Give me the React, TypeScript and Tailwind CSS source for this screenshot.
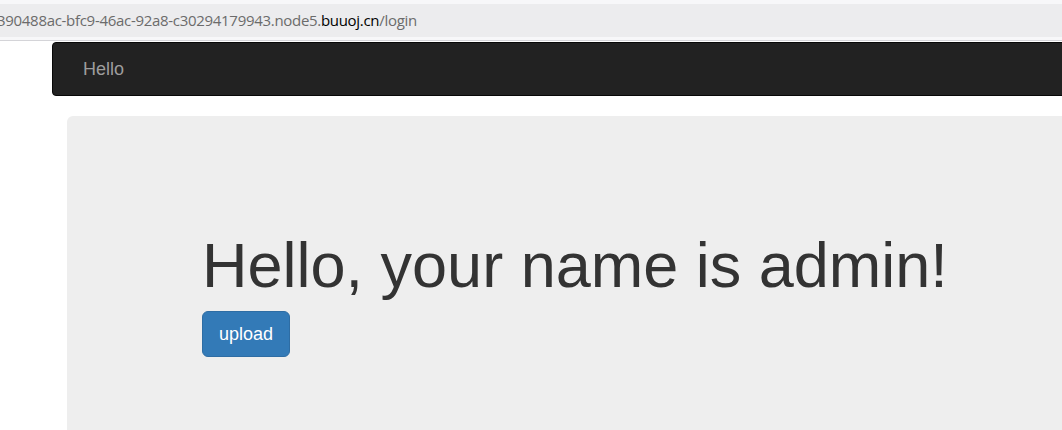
export default function App() {
  return (
    <div className="w-[1062px] h-[430px] overflow-hidden bg-white" style={{ fontFamily: "'Liberation Sans', Arial, sans-serif" }}>
      {/* address bar strip */}
      <div className="h-[4px] bg-[#f7f7f9]" />
      <div className="h-[33px] bg-[#ececee] flex items-center overflow-hidden whitespace-nowrap">
        <span className="ml-[-3px] text-[15px] tracking-[-0.3px] text-[#6b6b6b]" style={{ fontFamily: "'Open Sans', 'Liberation Sans', sans-serif" }}>
          390488ac-bfc9-46ac-92a8-c30294179943.node5.<span className="text-black">buuoj.cn</span>/login
        </span>
      </div>
      <div className="h-[4px] bg-[#f7f7f9] border-b border-[#d4d4d8]" />

      <nav className="ml-[52px] w-[1100px] h-[54px] mt-[1px] bg-[#222] border border-[#080808] rounded-l-[4px] flex items-center pl-[30px]">
        <span className="text-[18px] text-[#9d9d9d]">Hello</span>
      </nav>

      <div className="ml-[67px] mt-[20px] w-[1100px] h-[400px] bg-[#eee] rounded-[6px] pl-[135px] pt-[115px]">
        <h1 className="text-[63px] leading-[1.1] text-[#333]">Hello, your name is admin!</h1>
        <button
          type="button"
          className="mt-[11px] w-[88px] h-[46px] bg-[#337ab7] border border-[#2e6da4] rounded-[6px] text-white text-[18px]"
        >
          upload
        </button>
      </div>
    </div>
  );
}
